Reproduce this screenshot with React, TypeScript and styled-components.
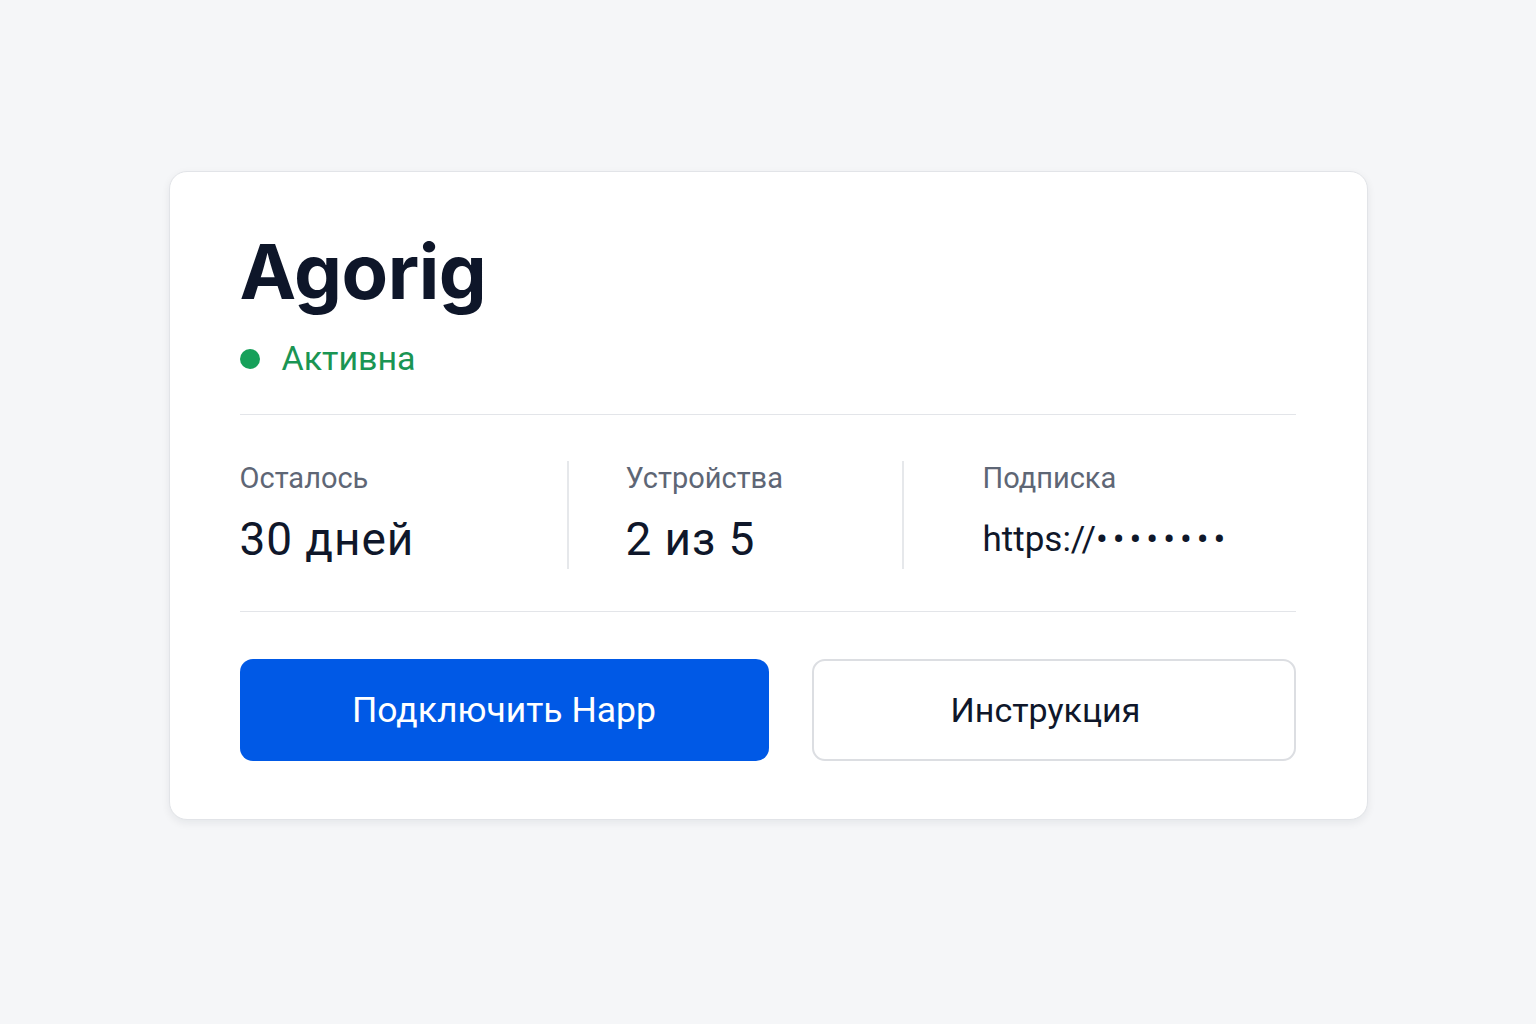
import React from "react";
import styled, { createGlobalStyle } from "styled-components";

const GlobalStyle = createGlobalStyle`
  body {
    margin: 0;
    background: #f5f6f8;
    font-family: "Roboto", "Liberation Sans", sans-serif;
  }
`;

const Page = styled.div`
  min-height: 1024px;
  display: flex;
  justify-content: center;
  align-items: flex-start;
  padding-top: 171px;
  box-sizing: border-box;
`;

const Card = styled.div`
  width: 1199px;
  box-sizing: border-box;
  background: #ffffff;
  border: 1px solid #e2e4e8;
  border-radius: 18px;
  box-shadow: 0 3px 9px rgba(15, 23, 42, 0.07);
  padding: 61px 71px 58px 70px;
`;

const Title = styled.h1`
  margin: 0;
  font-family: "Inter", "Roboto", sans-serif;
  font-weight: 700;
  font-size: 76px;
  line-height: 1;
  letter-spacing: -0.5px;
  color: #0e1629;
`;

const Status = styled.div`
  margin-top: 29px;
  display: flex;
  align-items: center;
  gap: 22px;
  font-size: 34px;
  line-height: 1.2;
  color: #1a9553;
`;

const Dot = styled.span`
  width: 20px;
  height: 20px;
  border-radius: 50%;
  background: #16a05a;
  margin-top: 2px;
`;

const Divider = styled.hr<{ $gap: number }>`
  margin: ${(p) => p.$gap}px 0 0;
  border: 0;
  height: 1px;
  background: #e3e5e9;
`;

const Stats = styled.div`
  display: grid;
  grid-template-columns: 327px 335px 1fr;
  padding: 46px 0 42px;
`;

const Stat = styled.div<{ $pad: number; $sep?: boolean }>`
  height: 108px;
  padding-left: ${(p) => p.$pad}px;
  border-left: ${(p) => (p.$sep ? "2px solid #e6e8eb" : "0")};
  display: flex;
  flex-direction: column;
  gap: 17px;
`;

const Label = styled.div`
  font-size: 29px;
  line-height: 1.2;
  color: #5e6675;
`;

const Value = styled.div<{ $small?: boolean }>`
  font-size: ${(p) => (p.$small ? 35 : 46)}px;
  line-height: 53px;
  letter-spacing: ${(p) => (p.$small ? 0 : 0.9)}px;
  color: #0f172a;
`;

const Dots = styled.span`
  letter-spacing: 5px;
`;

const Actions = styled.div`
  margin-top: 47px;
  display: grid;
  grid-template-columns: 529px 1fr;
  gap: 43px;
`;

const Button = styled.button<{ $primary?: boolean }>`
  height: 102px;
  border-radius: 13px;
  padding: ${(p) => (p.$primary ? "0" : "0 16px 0 0")};
  font-family: "Roboto", "Liberation Sans", sans-serif;
  font-size: ${(p) => (p.$primary ? 35.5 : 34)}px;
  cursor: pointer;
  border: ${(p) => (p.$primary ? "0" : "2px solid #dcdee2")};
  background: ${(p) => (p.$primary ? "#0059e6" : "#ffffff")};
  color: ${(p) => (p.$primary ? "#ffffff" : "#0f172a")};
`;

export default function App() {
  return (
    <>
      <GlobalStyle />
      <Page>
        <Card>
          <Title>Agorig</Title>
          <Status>
            <Dot />
            Активна
          </Status>
          <Divider $gap={35} />
          <Stats>
            <Stat $pad={0}>
              <Label>Осталось</Label>
              <Value>30 дней</Value>
            </Stat>
            <Stat $pad={57} $sep>
              <Label>Устройства</Label>
              <Value>2 из 5</Value>
            </Stat>
            <Stat $pad={79} $sep>
              <Label>Подписка</Label>
              <Value $small>
                https://<Dots>••••••••</Dots>
              </Value>
            </Stat>
          </Stats>
          <Divider $gap={0} />
          <Actions>
            <Button $primary>Подключить Happ</Button>
            <Button>Инструкция</Button>
          </Actions>
        </Card>
      </Page>
    </>
  );
}
